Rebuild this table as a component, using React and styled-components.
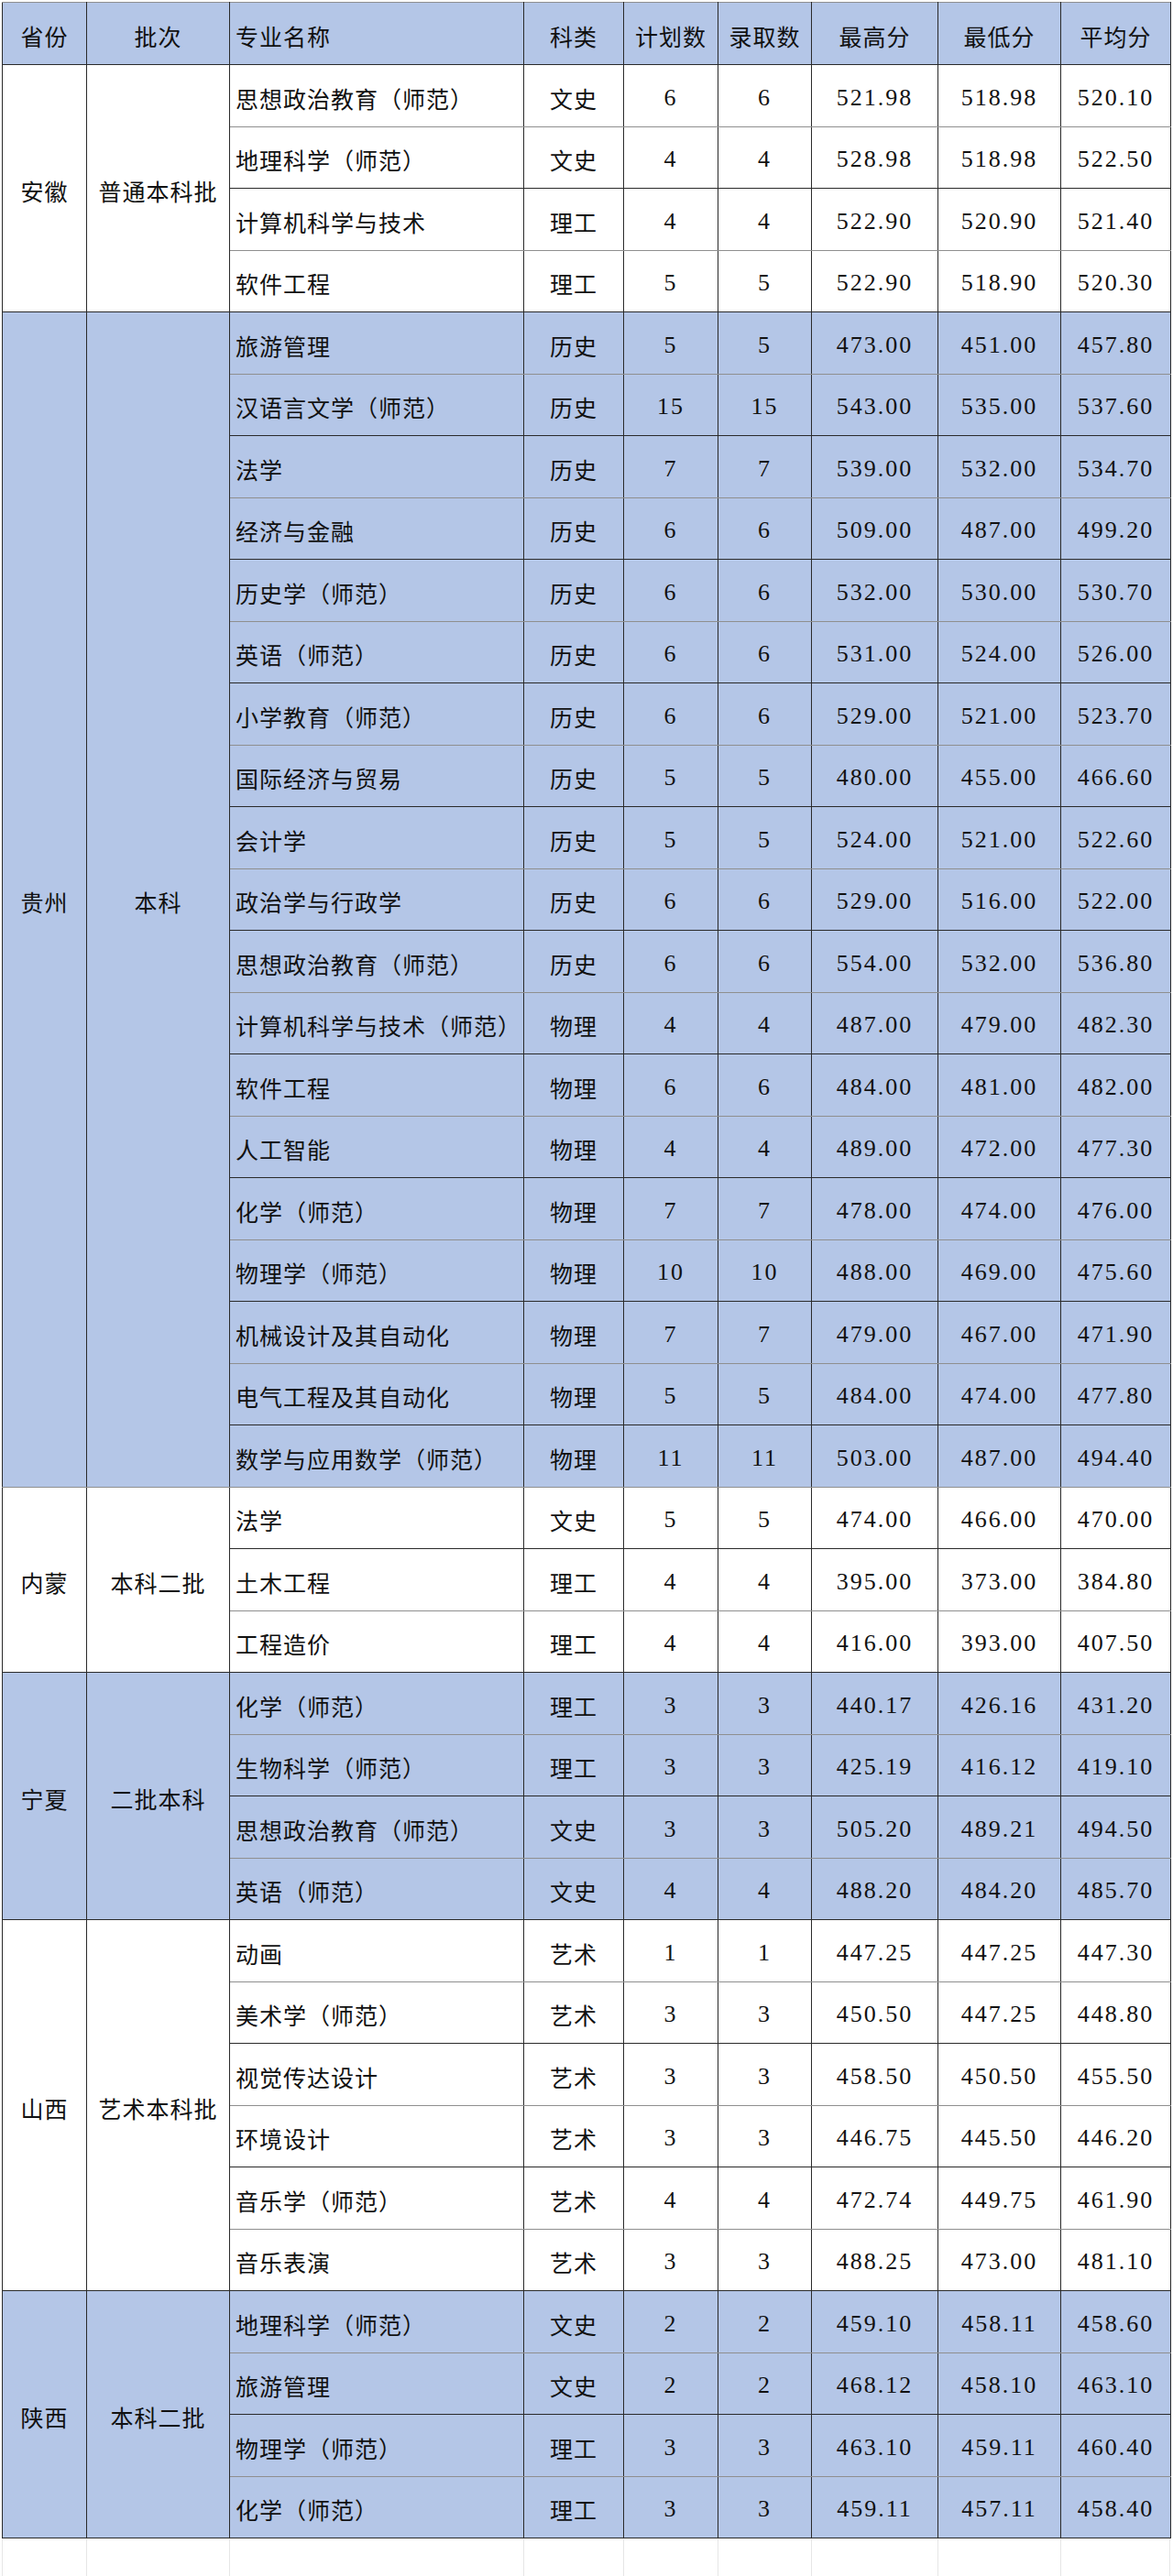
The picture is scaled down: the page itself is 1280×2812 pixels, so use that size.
import React from "react";
import styled, { createGlobalStyle, css } from "styled-components";

const Global = createGlobalStyle`
  html, body { margin: 0; padding: 0; background: #ffffff; }
  body { width: 1280px; }
`;

const BLUE = "#b4c6e7";
const DARK = "#2a2a2a";
const SOFT = "#8f8f8f";

const COLS = [92, 156, 321, 109, 103, 102, 138, 134, 120];

const groups = [
  {
    province: "安徽",
    batch: "普通本科批",
    blue: false,
    rows: [
      ["思想政治教育（师范）", "文史", "6", "6", "521.98", "518.98", "520.10"],
      ["地理科学（师范）", "文史", "4", "4", "528.98", "518.98", "522.50"],
      ["计算机科学与技术", "理工", "4", "4", "522.90", "520.90", "521.40"],
      ["软件工程", "理工", "5", "5", "522.90", "518.90", "520.30"],
    ],
  },
  {
    province: "贵州",
    batch: "本科",
    blue: true,
    rows: [
      ["旅游管理", "历史", "5", "5", "473.00", "451.00", "457.80"],
      ["汉语言文学（师范）", "历史", "15", "15", "543.00", "535.00", "537.60"],
      ["法学", "历史", "7", "7", "539.00", "532.00", "534.70"],
      ["经济与金融", "历史", "6", "6", "509.00", "487.00", "499.20"],
      ["历史学（师范）", "历史", "6", "6", "532.00", "530.00", "530.70"],
      ["英语（师范）", "历史", "6", "6", "531.00", "524.00", "526.00"],
      ["小学教育（师范）", "历史", "6", "6", "529.00", "521.00", "523.70"],
      ["国际经济与贸易", "历史", "5", "5", "480.00", "455.00", "466.60"],
      ["会计学", "历史", "5", "5", "524.00", "521.00", "522.60"],
      ["政治学与行政学", "历史", "6", "6", "529.00", "516.00", "522.00"],
      ["思想政治教育（师范）", "历史", "6", "6", "554.00", "532.00", "536.80"],
      ["计算机科学与技术（师范）", "物理", "4", "4", "487.00", "479.00", "482.30"],
      ["软件工程", "物理", "6", "6", "484.00", "481.00", "482.00"],
      ["人工智能", "物理", "4", "4", "489.00", "472.00", "477.30"],
      ["化学（师范）", "物理", "7", "7", "478.00", "474.00", "476.00"],
      ["物理学（师范）", "物理", "10", "10", "488.00", "469.00", "475.60"],
      ["机械设计及其自动化", "物理", "7", "7", "479.00", "467.00", "471.90"],
      ["电气工程及其自动化", "物理", "5", "5", "484.00", "474.00", "477.80"],
      ["数学与应用数学（师范）", "物理", "11", "11", "503.00", "487.00", "494.40"],
    ],
  },
  {
    province: "内蒙",
    batch: "本科二批",
    blue: false,
    rows: [
      ["法学", "文史", "5", "5", "474.00", "466.00", "470.00"],
      ["土木工程", "理工", "4", "4", "395.00", "373.00", "384.80"],
      ["工程造价", "理工", "4", "4", "416.00", "393.00", "407.50"],
    ],
  },
  {
    province: "宁夏",
    batch: "二批本科",
    blue: true,
    rows: [
      ["化学（师范）", "理工", "3", "3", "440.17", "426.16", "431.20"],
      ["生物科学（师范）", "理工", "3", "3", "425.19", "416.12", "419.10"],
      ["思想政治教育（师范）", "文史", "3", "3", "505.20", "489.21", "494.50"],
      ["英语（师范）", "文史", "4", "4", "488.20", "484.20", "485.70"],
    ],
  },
  {
    province: "山西",
    batch: "艺术本科批",
    blue: false,
    rows: [
      ["动画", "艺术", "1", "1", "447.25", "447.25", "447.30"],
      ["美术学（师范）", "艺术", "3", "3", "450.50", "447.25", "448.80"],
      ["视觉传达设计", "艺术", "3", "3", "458.50", "450.50", "455.50"],
      ["环境设计", "艺术", "3", "3", "446.75", "445.50", "446.20"],
      ["音乐学（师范）", "艺术", "4", "4", "472.74", "449.75", "461.90"],
      ["音乐表演", "艺术", "3", "3", "488.25", "473.00", "481.10"],
    ],
  },
  {
    province: "陕西",
    batch: "本科二批",
    blue: true,
    rows: [
      ["地理科学（师范）", "文史", "2", "2", "459.10", "458.11", "458.60"],
      ["旅游管理", "文史", "2", "2", "468.12", "458.10", "463.10"],
      ["物理学（师范）", "理工", "3", "3", "463.10", "459.11", "460.40"],
      ["化学（师范）", "理工", "3", "3", "459.11", "457.11", "458.40"],
    ],
  },
];

const headers = ["省份", "批次", "专业名称", "科类", "计划数", "录取数", "最高分", "最低分", "平均分"];

const Page = styled.div`
  padding: 2px 0 0 2px;
  width: 1280px;
  box-sizing: border-box;
  font-family: "Liberation Serif", "Noto Sans CJK SC", serif;
  color: #111;
`;

const Table = styled.table`
  border-collapse: collapse;
  table-layout: fixed;
  width: ${COLS.reduce((a, b) => a + b, 0)}px;
  border-top: 1px solid ${SOFT};
`;

const HeadRow = styled.tr`
  height: 68px;
  background: ${BLUE};
`;

const BodyRow = styled.tr`
  height: 67.5px;
  background: ${(p) => (p.$blue ? BLUE : "#ffffff")};
`;

const cellBase = css`
  border-left: 1px solid ${DARK};
  border-right: 1px solid ${DARK};
  border-top: 1px solid ${DARK};
  border-bottom: 1px solid ${(p) => (p.$soft ? SOFT : DARK)};
  padding: 5px 0 0 0;
  font-size: 25px;
  font-weight: 400;
  letter-spacing: 1px;
  white-space: nowrap;
  vertical-align: middle;
  text-align: ${(p) => (p.$left ? "left" : "center")};
  ${(p) => p.$left && css`padding-left: 6px;`}
`;

const HeadCell = styled.th`
  ${cellBase}
  border-top-color: ${SOFT};
  border-bottom-color: ${DARK};
`;

const Cell = styled.td`
  ${cellBase}
`;

const NumCell = styled.td`
  ${cellBase}
  font-size: 26px;
  letter-spacing: 2px;
`;

const Tail = styled.div`
  display: grid;
  grid-template-columns: ${COLS.map((c) => `${c}px`).join(" ")};
  height: 41px;
`;

const TailCell = styled.div`
  border-left: 1px solid #e6e6e6;
  &:last-child { border-right: 1px solid #e6e6e6; }
`;

export default function App() {
  let lineIdx = 0;
  const rows = [];
  groups.forEach((g, gi) => {
    const endIdx = lineIdx + g.rows.length;
    g.rows.forEach((r, ri) => {
      lineIdx += 1;
      const soft = lineIdx % 2 === 1;
      rows.push(
        <BodyRow key={`${gi}-${ri}`} $blue={g.blue}>
          {ri === 0 && (
            <>
              <Cell rowSpan={g.rows.length} $soft={endIdx % 2 === 1}>
                {g.province}
              </Cell>
              <Cell rowSpan={g.rows.length} $soft={endIdx % 2 === 1}>
                {g.batch}
              </Cell>
            </>
          )}
          <Cell $left $soft={soft}>{r[0]}</Cell>
          <Cell $soft={soft}>{r[1]}</Cell>
          <NumCell $soft={soft}>{r[2]}</NumCell>
          <NumCell $soft={soft}>{r[3]}</NumCell>
          <NumCell $soft={soft}>{r[4]}</NumCell>
          <NumCell $soft={soft}>{r[5]}</NumCell>
          <NumCell $soft={soft}>{r[6]}</NumCell>
        </BodyRow>
      );
    });
  });

  return (
    <Page>
      <Global />
      <Table>
        <colgroup>
          {COLS.map((w, i) => (
            <col key={i} style={{ width: w }} />
          ))}
        </colgroup>
        <thead>
          <HeadRow>
            {headers.map((h, i) => (
              <HeadCell key={h} $left={i === 2}>
                {h}
              </HeadCell>
            ))}
          </HeadRow>
        </thead>
        <tbody>{rows}</tbody>
      </Table>
      <Tail>
        {COLS.map((_, i) => (
          <TailCell key={i} />
        ))}
      </Tail>
    </Page>
  );
}
